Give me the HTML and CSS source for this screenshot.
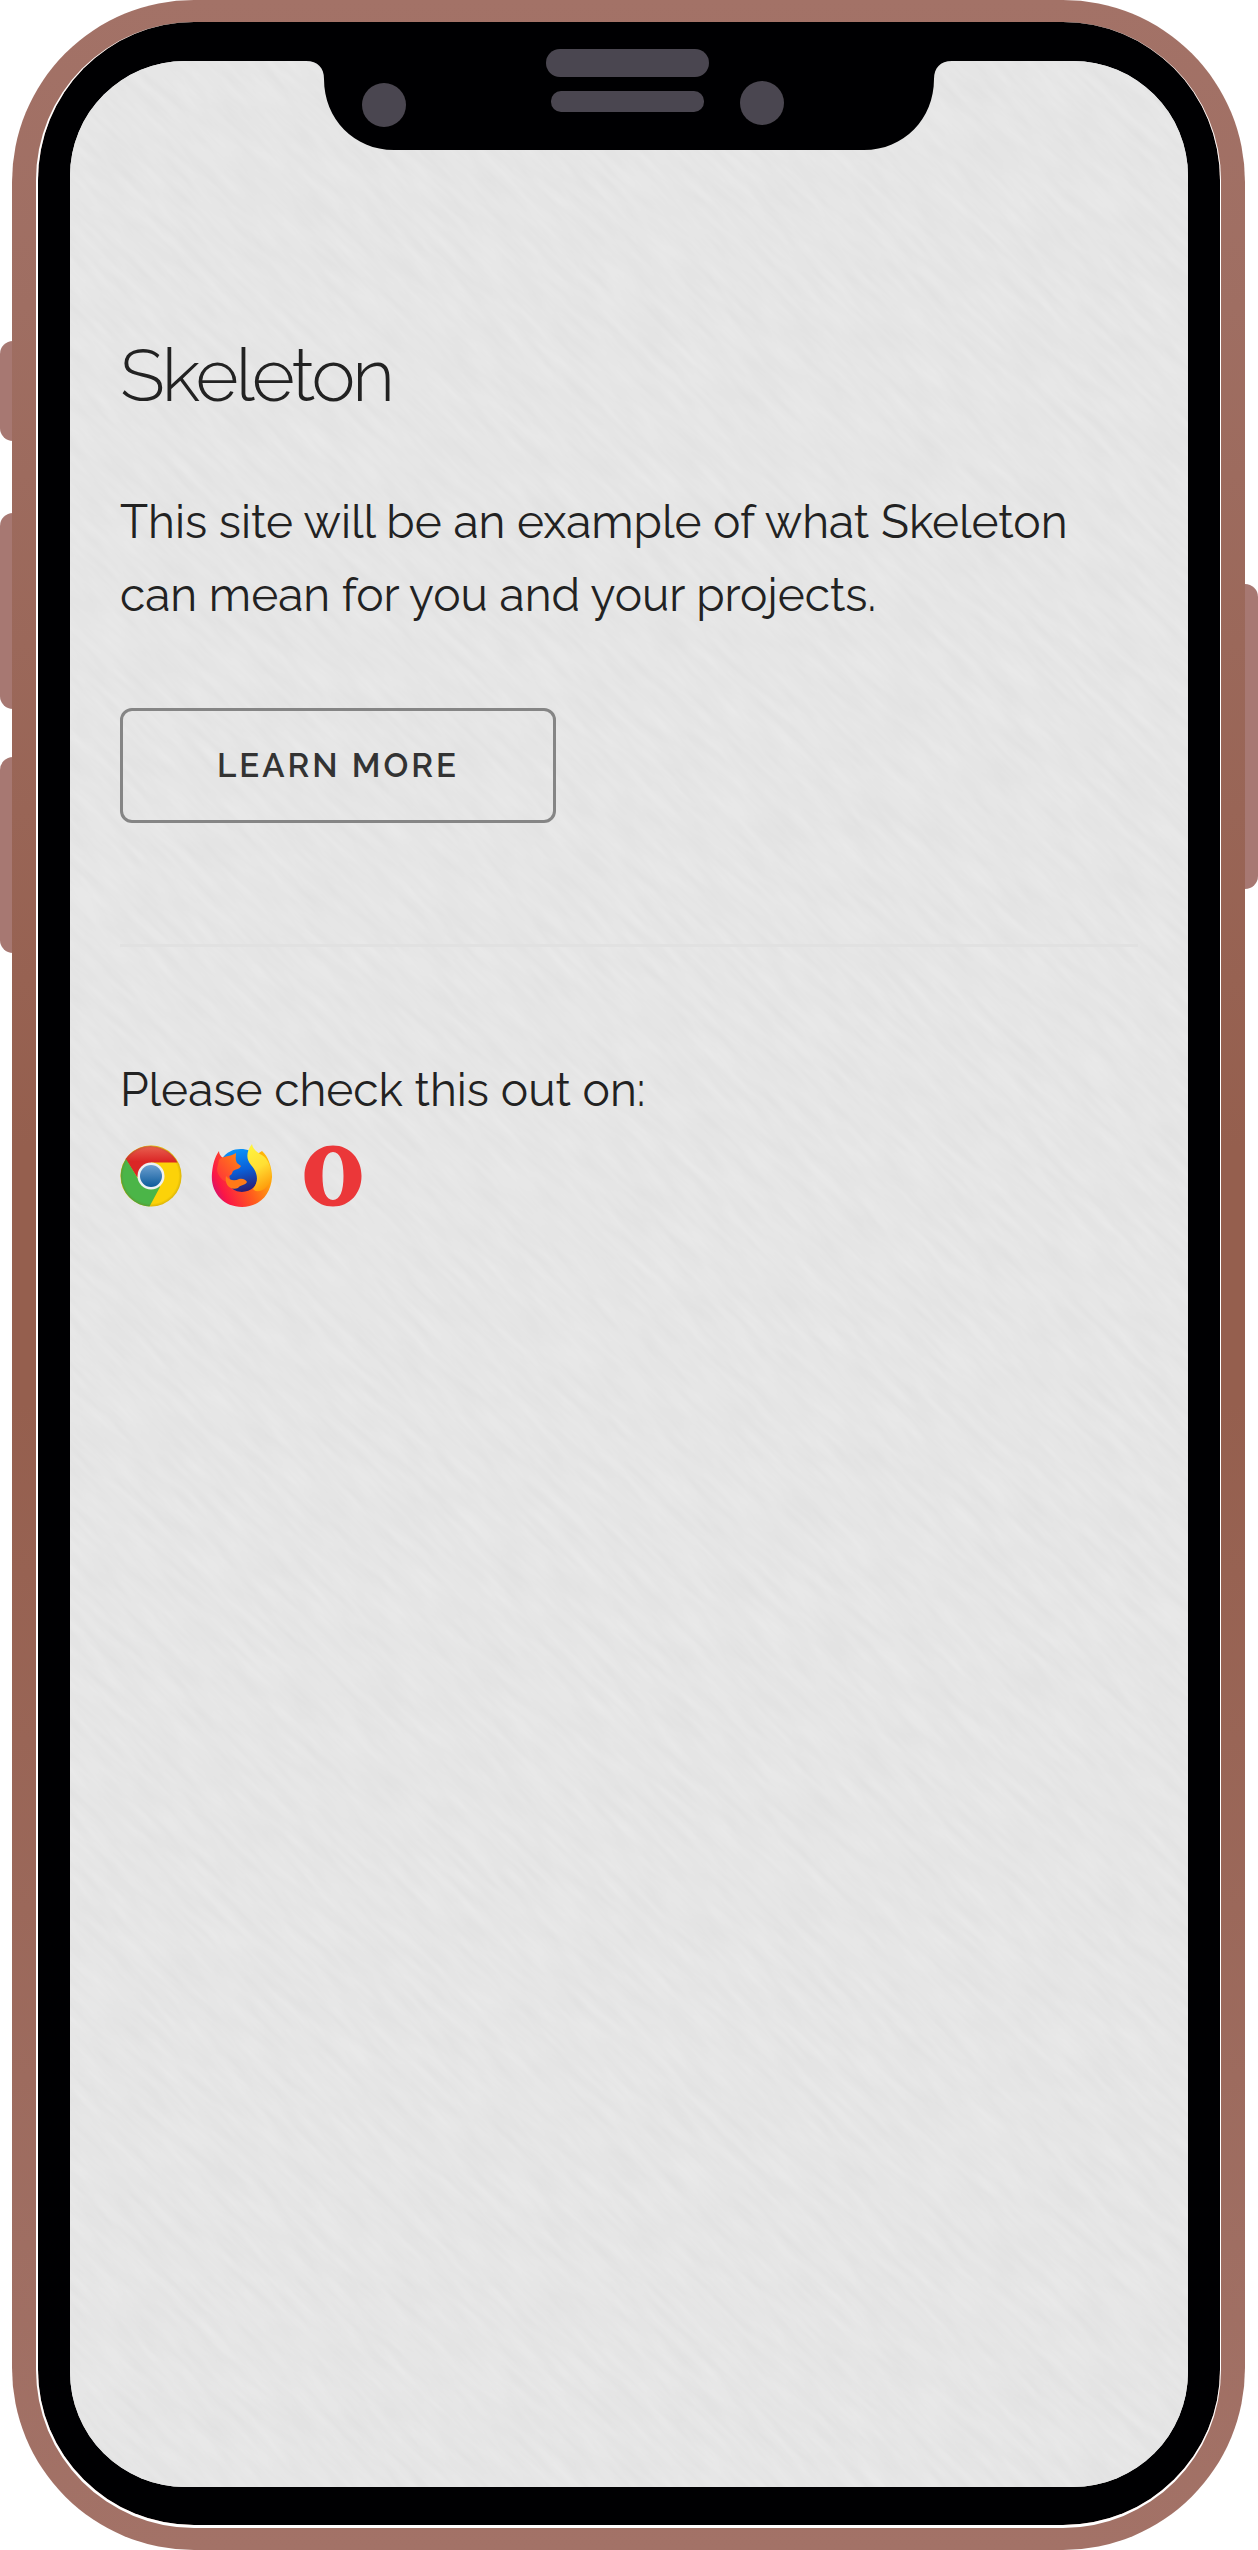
FILE: index.html
```html
<!DOCTYPE html>
<html lang="en">
<head>
<meta charset="utf-8">
<meta name="viewport" content="width=device-width, initial-scale=1">
<title>Skeleton</title>
<link rel="stylesheet" href="styles.css">
</head>
<body>
<div class="phone">
  <span class="key key-mute"></span>
  <span class="key key-up"></span>
  <span class="key key-down"></span>
  <span class="key key-power"></span>
  <div class="rim">
    <div class="bezel">
      <div class="notch">
        <svg class="notch-shape" viewBox="0 0 646 90" aria-hidden="true">
          <path d="M0 0V1C12 1 18 8 18 19C18 59 48 90 88 90H558C598 90 628 59 628 19C628 8 634 1 646 1V0Z" fill="#000002"/>
          <g fill="#4a4650">
            <circle cx="78" cy="45" r="22"/>
            <circle cx="456" cy="43" r="22"/>
            <rect x="240" y="-11" width="163" height="28" rx="14"/>
            <rect x="245" y="31" width="153" height="21" rx="10"/>
          </g>
        </svg>
      </div>
      <main class="screen">
        <svg class="paper" aria-hidden="true">
          <filter id="fibre" x="0" y="0" width="100%" height="100%" color-interpolation-filters="sRGB">
            <feTurbulence type="fractalNoise" baseFrequency="0.018 0.12" numOctaves="3" seed="4"/>
            <feColorMatrix values="0.038 0 0 0 0.881  0.038 0 0 0 0.881  0.038 0 0 0 0.881  0 0 0 0 1"/>
          </filter>
          <rect width="100%" height="100%" filter="url(#fibre)"/>
        </svg>
        <div class="content">
          <h1>Skeleton</h1>
          <p>This site will be an example of what Skeleton can mean for you and your projects.</p>
          <button class="button" type="button">Learn more</button>
          <hr>
          <p>Please check this out on:</p>
          <ul class="browsers">
            <li>
              <svg viewBox="0 0 62 62" role="img" aria-label="Chrome">
                <defs>
                  <linearGradient id="c-red" x1="0" y1="0" x2="0" y2="1"><stop offset="0" stop-color="#e8604f"/><stop offset=".5" stop-color="#db2626"/></linearGradient>
                  <linearGradient id="c-blue" x1="0" y1="0" x2="0" y2="1"><stop offset="0" stop-color="#6d9fd0"/><stop offset="1" stop-color="#0c5b9b"/></linearGradient>
                  <radialGradient id="c-edge"><stop offset=".9" stop-color="#7a5a00" stop-opacity="0"/><stop offset="1" stop-color="#7a5a00" stop-opacity=".25"/></radialGradient>
                </defs>
                <circle cx="31" cy="31" r="30.500" fill="#fcd209"/>
                <path d="M31 31L17 32L5.500 14A30.500 30.500 0 0 1 57.500 17.500H31Z" fill="url(#c-red)"/>
                <path d="M6 14A30.500 30.500 0 0 0 29.500 61.500L40 42L31 31L17.500 33Z" fill="#4bb548"/>
                <circle cx="31" cy="31" r="30.500" fill="url(#c-edge)"/>
                <circle cx="31" cy="31" r="13.500" fill="#eef1f4"/>
                <circle cx="31" cy="31" r="11" fill="url(#c-blue)"/>
              </svg>
            </li>
            <li>
              <svg class="firefox" viewBox="0 0 62 62" role="img" aria-label="Firefox">
                <defs>
                  <linearGradient id="f-globe" x1=".4" y1="0" x2=".6" y2="1"><stop offset="0" stop-color="#0a94fa"/><stop offset=".5" stop-color="#0a5fd8"/><stop offset="1" stop-color="#2b1c72"/></linearGradient>
                  <linearGradient id="f-body" x1="0" y1=".8" x2="1" y2=".35"><stop offset="0" stop-color="#c4107f"/><stop offset=".18" stop-color="#fb1746"/><stop offset=".55" stop-color="#ff5b1d"/><stop offset="1" stop-color="#ffb808"/></linearGradient>
                  <linearGradient id="f-flame" x1=".3" y1="0" x2=".6" y2="1"><stop offset="0" stop-color="#fff33d"/><stop offset=".5" stop-color="#ffdf34"/><stop offset="1" stop-color="#ff9b0a"/></linearGradient>
                  <linearGradient id="f-head" x1="0" y1="1" x2="1" y2="0"><stop offset="0" stop-color="#ff2f3a"/><stop offset="1" stop-color="#ff8a12"/></linearGradient>
                </defs>
                <path d="M8 6C4 12 2 18 1 28C-1 47 12 62 31 62C49 62 60 49 61 32C61 22 57 11 51 6L42 12L12 13Q8 10 8 6Z" fill="url(#f-body)"/>
                <path d="M11 14C17 4 30 2 39 6L44 14C49 25 48 36 43 42C36 49 24 48 20 42L18 28Z" fill="url(#f-globe)"/>
                <path d="M41 -1C35 7 35 14 40 20C47 28 48 36 42 44C46 50 60 44 60 30C60 18 55 12 49 9C45 6 42 4 41 -1Z" fill="url(#f-flame)"/>
                <path d="M8 15C12 10 17 13 25 8C25 12 24 14 26 18L30 21C28 25 24 24 22 26C21 28 21 30 18 31L19 36C16 40 6 32 6 24Z" fill="url(#f-head)"/>
                <path d="M15 31C19 36 24 36 28 34C32 33 35 35 36 37C34 41 30 39 27 43C20 46 13 40 15 31Z" fill="#ff7a18"/>
              </svg>
            </li>
            <li>
              <svg viewBox="0 0 62 62" role="img" aria-label="Opera">
                <path fill="#eb3739" fill-rule="evenodd" d="M31 .500C48 .500 59.500 14 59.500 31C59.500 48 48 61.500 31 61.500C14 61.500 2.500 48 2.500 31C2.500 14 14 .500 31 .500ZM31 7C24 7 20.500 16 20.500 31C20.500 46 24 55 31 55C38 55 41.500 46 41.500 31C41.500 16 38 7 31 7Z"/>
              </svg>
            </li>
          </ul>
        </div>
      </main>
    </div>
  </div>
</div>
</body>
</html>
```
FILE: styles.css
```css
* {
  box-sizing: border-box;
}

body {
  margin: 0;
  background: #fff;
  color: #222;
  font-family: Raleway, Lato, "Open Sans", sans-serif;
  font-size: 46px;
  font-weight: 400;
  line-height: 73px;
}

/* Phone body */
.phone {
  position: relative;
  display: flex;
  min-height: 100vh;
  padding: 0 13px 0 12px;
}

.rim {
  position: relative;
  display: flex;
  flex: 1;
  padding: 22px 24px;
  border-radius: 182px;
  background: linear-gradient(#a37267, #9f6e62 12%, #955f4e 45%, #955f4e 55%, #9f6e62 88%, #a37267);
}

.bezel {
  position: relative;
  display: flex;
  flex: 1;
  padding: 39px 32px 38px;
  border: solid #fff;
  border-width: 0 1px 3px 2px;
  border-radius: 158px;
  background: #000002;
  background-clip: padding-box;
}

.key {
  position: absolute;
  left: 0;
  width: 26px;
  height: 196px;
  border-radius: 14px;
  background: #a77872;
}

.key-mute {
  top: 341px;
  height: 100px;
}

.key-up {
  top: 513px;
}

.key-down {
  top: 757px;
}

.key-power {
  top: 584px;
  right: 0;
  left: auto;
  height: 305px;
}

.notch {
  position: absolute;
  z-index: 1;
  top: 38px;
  right: 0;
  left: 0;
  display: flex;
  justify-content: center;
}

.notch-shape {
  width: 646px;
  height: 90px;
  overflow: visible;
}

/* Screen */
.screen {
  position: relative;
  flex: 1;
  overflow: hidden;
  padding: 270px 50px 50px;
  border-radius: 115px;
  background: #e5e5e5;
}

.paper {
  position: absolute;
  top: -50%;
  left: -100%;
  width: 300%;
  height: 200%;
  transform: rotate(45deg);
}

.content {
  position: relative;
}

h1 {
  margin: 0 0 67px;
  font-size: 74px;
  font-weight: 300;
  letter-spacing: -3px;
  line-height: 88px;
}

p {
  margin: 0;
}

.button {
  display: block;
  height: 115px;
  margin: 76px 0 121px;
  padding: 0 94px;
  border: 3px solid #858585;
  border-radius: 12px;
  background: transparent;
  color: #333;
  font: inherit;
  font-size: 33px;
  font-weight: 600;
  letter-spacing: 3px;
  text-transform: uppercase;
}

hr {
  height: 3px;
  margin: 0 0 107px;
  border: 0;
  background: #e1e1e1;
}

.browsers {
  display: flex;
  gap: 29px;
  margin: 18px 0 0;
  padding: 0;
  list-style: none;
}

.browsers li {
  display: flex;
}

.browsers svg {
  width: 62px;
  height: 62px;
}

.browsers .firefox {
  overflow: visible;
}
```
